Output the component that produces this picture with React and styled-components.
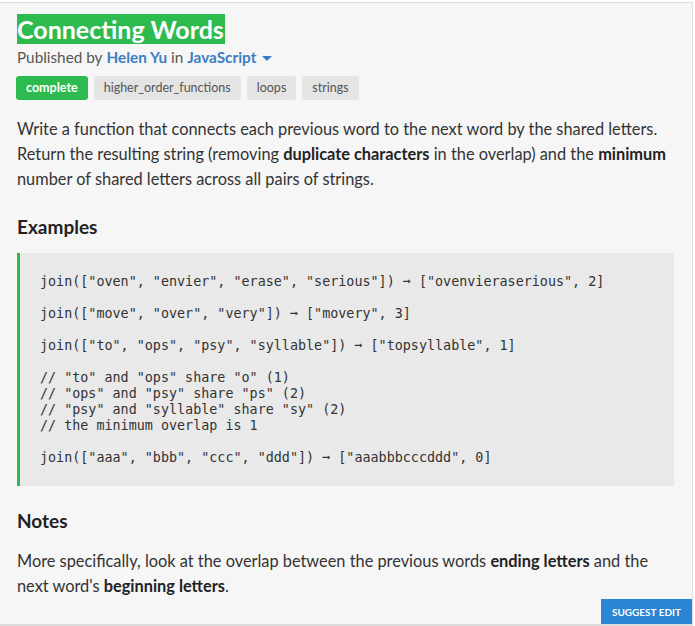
import React from 'react';
import styled, { createGlobalStyle } from 'styled-components';

const GlobalStyle = createGlobalStyle`
  html, body {
    margin: 0;
    padding: 0;
    background: #ffffff;
  }
  body {
    font-family: Lato, 'Liberation Sans', sans-serif;
  }
`;

const Panel = styled.div`
  box-sizing: border-box;
  width: 693px;
  height: 624px;
  margin-top: 2px;
  background: #f6f6f6;
  border-top: 1px solid #dddddd;
  border-right: 1px solid #dddddd;
  border-bottom: 2px solid #dddddd;
  padding: 11px 18px 0 16px;
  position: relative;
  color: #333333;
`;

const Title = styled.h1`
  display: inline-block;
  margin: 0 0 0 1px;
  background: #2dba4e;
  color: #ffffff;
  font-size: 25px;
  font-weight: 700;
  line-height: 30px;
  padding: 0 1px 0 0;
`;

const Byline = styled.div`
  margin: 4px 0 0 1px;
  font-size: 15.3px;
  color: #555555;
  display: flex;
  align-items: center;
  gap: 4px;
`;

const Link = styled.span`
  color: #3a7fc4;
  font-weight: 700;
`;

const Caret = styled.span`
  display: inline-block;
  width: 0;
  height: 0;
  border-left: 5px solid transparent;
  border-right: 5px solid transparent;
  border-top: 5px solid #3a7fc4;
  margin-left: 2px;
  margin-top: 2px;
`;

const Tags = styled.div`
  display: flex;
  gap: 6px;
  margin-top: 10px;
`;

const Tag = styled.span`
  display: inline-block;
  padding: 0 10px;
  height: 24px;
  line-height: 24px;
  border-radius: 3px;
  font-size: 12.5px;
  font-weight: ${p => (p.done ? 700 : 400)};
  background: ${p => (p.done ? '#2dba4e' : '#e4e4e4')};
  color: ${p => (p.done ? '#ffffff' : '#555555')};
`;

const Para = styled.p`
  margin: ${p => p.top || 16}px 0 0 1px;
  font-size: 16.35px;
  line-height: 25px;
  color: #333333;
  b {
    font-weight: 700;
    color: #222222;
  }
`;

const Heading = styled.h2`
  margin: ${p => p.top || 24}px 0 0 1px;
  font-size: 19px;
  font-weight: 700;
  color: #222222;
  line-height: 24px;
`;

const Code = styled.pre`
  margin: 14px 0 0 1px;
  background: #e9e9e9;
  border-left: 3px solid #2dba4e;
  padding: 21px 20px 20px 20px;
  font-family: 'DejaVu Sans Mono', 'Liberation Mono', monospace;
  font-size: 13.4px;
  line-height: 16px;
  color: #333333;
  white-space: pre;
`;

const SuggestButton = styled.button`
  position: absolute;
  right: 0;
  bottom: 0;
  width: 91px;
  height: 25px;
  border: none;
  background: #2a85d3;
  color: #ffffff;
  font-family: Lato, 'Liberation Sans', sans-serif;
  font-size: 10px;
  font-weight: 700;
  text-transform: uppercase;
  padding: 0;
`;

const code = `join(["oven", "envier", "erase", "serious"]) ➞ ["ovenvieraserious", 2]

join(["move", "over", "very"]) ➞ ["movery", 3]

join(["to", "ops", "psy", "syllable"]) ➞ ["topsyllable", 1]

// "to" and "ops" share "o" (1)
// "ops" and "psy" share "ps" (2)
// "psy" and "syllable" share "sy" (2)
// the minimum overlap is 1

join(["aaa", "bbb", "ccc", "ddd"]) ➞ ["aaabbbcccddd", 0]`;

function App() {
  return (
    <>
      <GlobalStyle />
      <Panel>
        <Title>Connecting Words</Title>
        <Byline>
          Published by <Link>Helen Yu</Link> in <Link>JavaScript</Link>
          <Caret />
        </Byline>
        <Tags>
          <Tag done>complete</Tag>
          <Tag>higher_order_functions</Tag>
          <Tag>loops</Tag>
          <Tag>strings</Tag>
        </Tags>
        <Para>
          Write a function that connects each previous word to the next word by the shared letters.
          Return the resulting string (removing <b>duplicate characters</b> in the overlap) and the{' '}
          <b>minimum</b> number of shared letters across all pairs of strings.
        </Para>
        <Heading>Examples</Heading>
        <Code>{code}</Code>
        <Heading top={23}>Notes</Heading>
        <Para top={15}>
          More specifically, look at the overlap between the previous words <b>ending letters</b> and
          the next word's <b>beginning letters</b>.
        </Para>
        <SuggestButton>Suggest Edit</SuggestButton>
      </Panel>
    </>
  );
}

export default App;
